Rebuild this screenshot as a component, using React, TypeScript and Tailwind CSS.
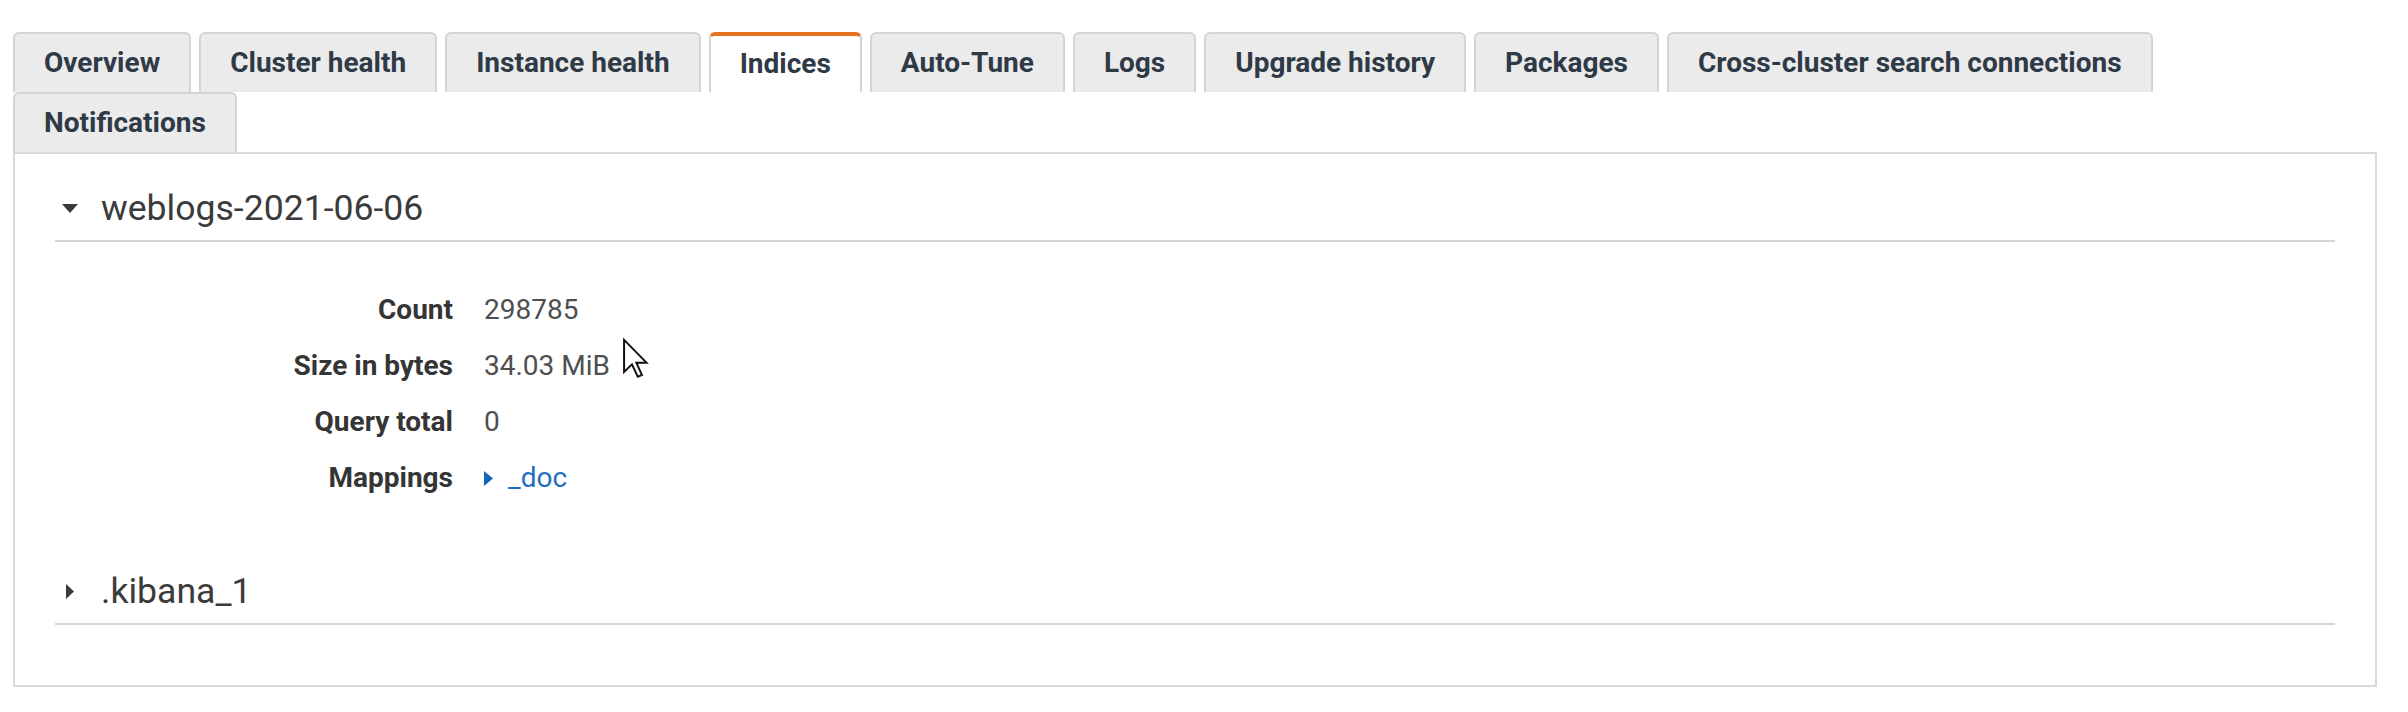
import React from "react";

const tabs = [
  "Overview",
  "Cluster health",
  "Instance health",
  "Indices",
  "Auto-Tune",
  "Logs",
  "Upgrade history",
  "Packages",
  "Cross-cluster search connections",
  "Notifications",
];

function CaretDown() {
  return (
    <svg width="16" height="9" viewBox="0 0 16 9" className="block">
      <polygon points="0,0 16,0 8,9" fill="#3a3a3a" />
    </svg>
  );
}

function CaretRight({ color = "#3a3a3a", w = 8, h = 15 }: { color?: string; w?: number; h?: number }) {
  return (
    <svg width={w} height={h} viewBox={`0 0 ${w} ${h}`} className="block">
      <polygon points={`0,0 ${w},${h / 2} 0,${h}`} fill={color} />
    </svg>
  );
}

function Cursor() {
  return (
    <svg
      width="27"
      height="43"
      viewBox="0 0 13 20"
      className="absolute left-[622px] top-[337px]"
    >
      <polygon
        points="1,1 1,16.5 4.8,12.8 7.6,18.8 9.6,17.9 6.9,12 11.8,12"
        fill="#ffffff"
        stroke="#111111"
        strokeWidth="0.95"
        strokeLinejoin="miter"
      />
    </svg>
  );
}

function SectionHeader({ title, open }: { title: string; open: boolean }) {
  return (
    <div className="flex items-center border-b-2 border-[#d6d6d6] pt-[32px] pb-[10px]">
      <div className="flex w-[30px] justify-center">
        {open ? <CaretDown /> : <CaretRight />}
      </div>
      <div className="ml-[16px] text-[35.6px] leading-[44px] text-[#3b3b3b]">{title}</div>
    </div>
  );
}

export default function App() {
  const rows: [string, React.ReactNode][] = [
    ["Count", "298785"],
    ["Size in bytes", "34.03 MiB"],
    ["Query total", "0"],
    [
      "Mappings",
      <span className="flex items-center" key="m">
        <CaretRight color="#1166bb" w={9} h={15} />
        <span className="ml-[15px] text-[#1f6fbf]">_doc</span>
      </span>,
    ],
  ];

  return (
    <div
      className="relative h-[712px] w-[2408px] bg-white"
      style={{ fontFamily: "Roboto, 'Liberation Sans', sans-serif" }}
    >
      <div className="w-[2364px] pl-[13px] pt-[32px]">
        <div className="flex flex-wrap">
          {tabs.map((t) => {
            const active = t === "Indices";
            return (
              <div
                key={t}
                className={
                  active
                    ? "mr-[8px] flex h-[60px] items-center rounded-t-[6px] border-x-2 border-t-[4px] border-x-[#d4d4d4] border-t-[#e8731f] bg-white px-[29px] text-[28px] font-bold text-[#2f3a47]"
                    : "mr-[8px] flex h-[60px] items-center rounded-t-[6px] border-2 border-b-0 border-[#d4d4d4] bg-[#ebebeb] px-[29px] text-[28px] font-bold text-[#2f3a47]"
                }
              >
                <span>{t}</span>
              </div>
            );
          })}
        </div>
        <div className="w-[2364px] border-2 border-[#d9d9d9] px-[40px] pb-[60px]">
          <SectionHeader title="weblogs-2021-06-06" open />
          <div className="mt-[40px] grid grid-cols-[398px_1fr] gap-x-[31px] text-[28px] leading-[56px]">
            {rows.map(([k, v]) => (
              <React.Fragment key={k}>
                <div className="text-right font-bold text-[#353535]">{k}</div>
                <div className="flex items-center text-[#4f4f4f]">{v}</div>
              </React.Fragment>
            ))}
          </div>
          <div className="mt-[31px]">
            <SectionHeader title=".kibana_1" open={false} />
          </div>
        </div>
      </div>
      <Cursor />
    </div>
  );
}
